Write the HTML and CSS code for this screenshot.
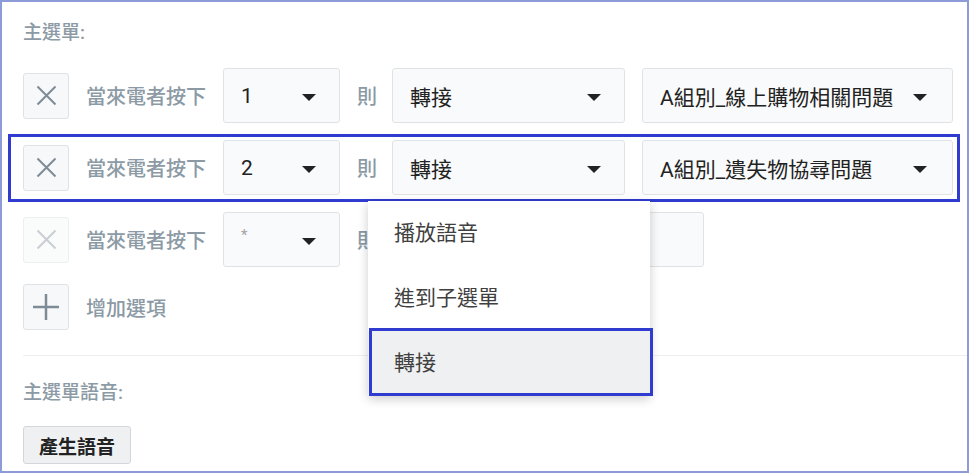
FILE: index.html
```html
<!DOCTYPE html>
<html lang="zh-Hant">
<head>
  <meta charset="UTF-8">
  <meta name="viewport" content="width=device-width, initial-scale=1.0">
  <title>主選單設定</title>
  <link rel="stylesheet" href="styles.css">
</head>
<body>
  <div class="panel">
    <div class="section-title">主選單:</div>

    <div class="option-list">
      <div class="option-row">
        <button class="icon-btn">
          <svg width="21" height="21" viewBox="0 0 21 21"><path d="M1.5 1.5L19.5 19.5M19.5 1.5L1.5 19.5" stroke="currentColor" stroke-width="2" fill="none"/></svg>
        </button>
        <span class="row-label">當來電者按下</span>
        <div class="select key-select"><span>1</span><i class="caret"></i></div>
        <span class="row-label then">則</span>
        <div class="select action-select"><span>轉接</span><i class="caret"></i></div>
        <div class="select target-select"><span>A組別_線上購物相關問題</span><i class="caret"></i></div>
      </div>

      <div class="option-row is-focused">
        <button class="icon-btn">
          <svg width="21" height="21" viewBox="0 0 21 21"><path d="M1.5 1.5L19.5 19.5M19.5 1.5L1.5 19.5" stroke="currentColor" stroke-width="2" fill="none"/></svg>
        </button>
        <span class="row-label">當來電者按下</span>
        <div class="select key-select"><span>2</span><i class="caret"></i></div>
        <span class="row-label then">則</span>
        <div class="select action-select">
          <span>轉接</span><i class="caret"></i>
          <!-- 開啟中的下拉選單 -->
          <ul class="menu">
            <li class="menu-item">播放語音</li>
            <li class="menu-item">進到子選單</li>
            <li class="menu-item is-active">轉接</li>
          </ul>
        </div>
        <div class="select target-select"><span>A組別_遺失物協尋問題</span><i class="caret"></i></div>
      </div>

      <div class="option-row">
        <button class="icon-btn is-disabled">
          <svg width="21" height="21" viewBox="0 0 21 21"><path d="M1.5 1.5L19.5 19.5M19.5 1.5L1.5 19.5" stroke="currentColor" stroke-width="2" fill="none"/></svg>
        </button>
        <span class="row-label">當來電者按下</span>
        <div class="select key-select"><span class="placeholder">*</span><i class="caret"></i></div>
        <span class="row-label then">則</span>
        <div class="select action-select"><span></span><i class="caret"></i></div>
        <div class="select short-box"></div>
      </div>

      <div class="option-row add-row">
        <button class="icon-btn">
          <svg width="28" height="28" viewBox="0 0 28 28"><path d="M14 1V27M1 14H27" stroke="currentColor" stroke-width="2.5" fill="none"/></svg>
        </button>
        <span class="row-label">增加選項</span>
      </div>
    </div>

    <div class="divider"></div>

    <div class="section-title voice-title">主選單語音:</div>
    <button class="gen-btn">產生語音</button>
  </div>
</body>
</html>
```

FILE: styles.css
```css
body {
  margin: 0;
  background: #fff;
}

.panel {
  box-sizing: border-box;
  width: 969px;
  height: 473px;
  border: 2px solid #8e9bd9;
  padding: 19px 0 0 21px;
  font-family: Roboto, "Noto Sans CJK TC", sans-serif;
  font-weight: 500;
  background: #fff;
}

.section-title {
  font-size: 19px;
  line-height: 24px;
  color: #8b9aa5;
}

.option-list {
  display: flex;
  flex-direction: column;
  gap: 17px;
  margin-top: 23px;
}

.option-row {
  position: relative;
  display: flex;
  align-items: center;
  gap: 17px;
  height: 55px;
}

.add-row {
  height: 46px;
}

/* 外框標示（目前編輯中的選項） */
.option-row.is-focused::after {
  content: "";
  position: absolute;
  left: -15px;
  right: 7px;
  top: -6px;
  bottom: -7px;
  border: 3px solid #2f3ccf;
  pointer-events: none;
}

.icon-btn {
  box-sizing: border-box;
  width: 46px;
  height: 46px;
  padding: 0;
  border: 1px solid #dfe3e6;
  border-radius: 3px;
  background: #f7f8f9;
  color: #7d8c97;
  display: flex;
  align-items: center;
  justify-content: center;
}

.icon-btn.is-disabled {
  color: #c9ced3;
  border-color: #eceef0;
  background: #fafbfb;
}

.row-label {
  font-size: 20px;
  color: #8b9aa5;
  white-space: nowrap;
}

.row-label.then {
  margin-right: -2px;
}

.select {
  position: relative;
  box-sizing: border-box;
  height: 55px;
  padding: 0 23px 0 17px;
  border: 1px solid #dfe3e6;
  border-radius: 3px;
  background: #f9fafb;
  display: flex;
  align-items: center;
  justify-content: space-between;
  font-size: 21px;
  font-weight: 400;
  color: #222;
  white-space: nowrap;
}

.key-select {
  width: 117px;
}

.action-select {
  width: 233px;
}

.target-select {
  width: 311px;
  padding-right: 25px;
}

.short-box {
  width: 62px;
}

.placeholder {
  font-size: 15px;
  color: #a3a3a3;
  align-self: flex-start;
  margin-top: 13px;
}

.caret {
  width: 0;
  height: 0;
  margin-top: 4px;
  border-left: 7px solid transparent;
  border-right: 7px solid transparent;
  border-top: 7px solid #222;
}

/* 下拉選單 */
.menu {
  position: absolute;
  top: calc(100% + 7px);
  left: -25px;
  z-index: 2;
  width: 282px;
  margin: 0;
  padding: 0;
  list-style: none;
  background: #fff;
  box-shadow: 0 3px 10px rgba(0, 0, 0, 0.2);
}

.menu-item {
  position: relative;
  box-sizing: border-box;
  height: 65px;
  padding: 0 0 6px 26px;
  display: flex;
  align-items: center;
  font-size: 21px;
  color: #404040;
}

.menu-item.is-active {
  background: #eef0f2;
}

.menu-item.is-active::after {
  content: "";
  position: absolute;
  left: 1px;
  right: -3px;
  top: -3px;
  bottom: 0;
  border: 3px solid #2f3ccf;
}

.divider {
  margin-top: 25px;
  border-top: 1px solid #eceef0;
}

.voice-title {
  margin-top: 25px;
}

.gen-btn {
  display: block;
  box-sizing: border-box;
  width: 108px;
  height: 38px;
  margin-top: 21px;
  padding: 0;
  border: 1px solid #d3d7db;
  border-radius: 3px;
  background: #eef0f2;
  font-family: inherit;
  font-size: 19px;
  font-weight: bold;
  color: #222;
}
```
